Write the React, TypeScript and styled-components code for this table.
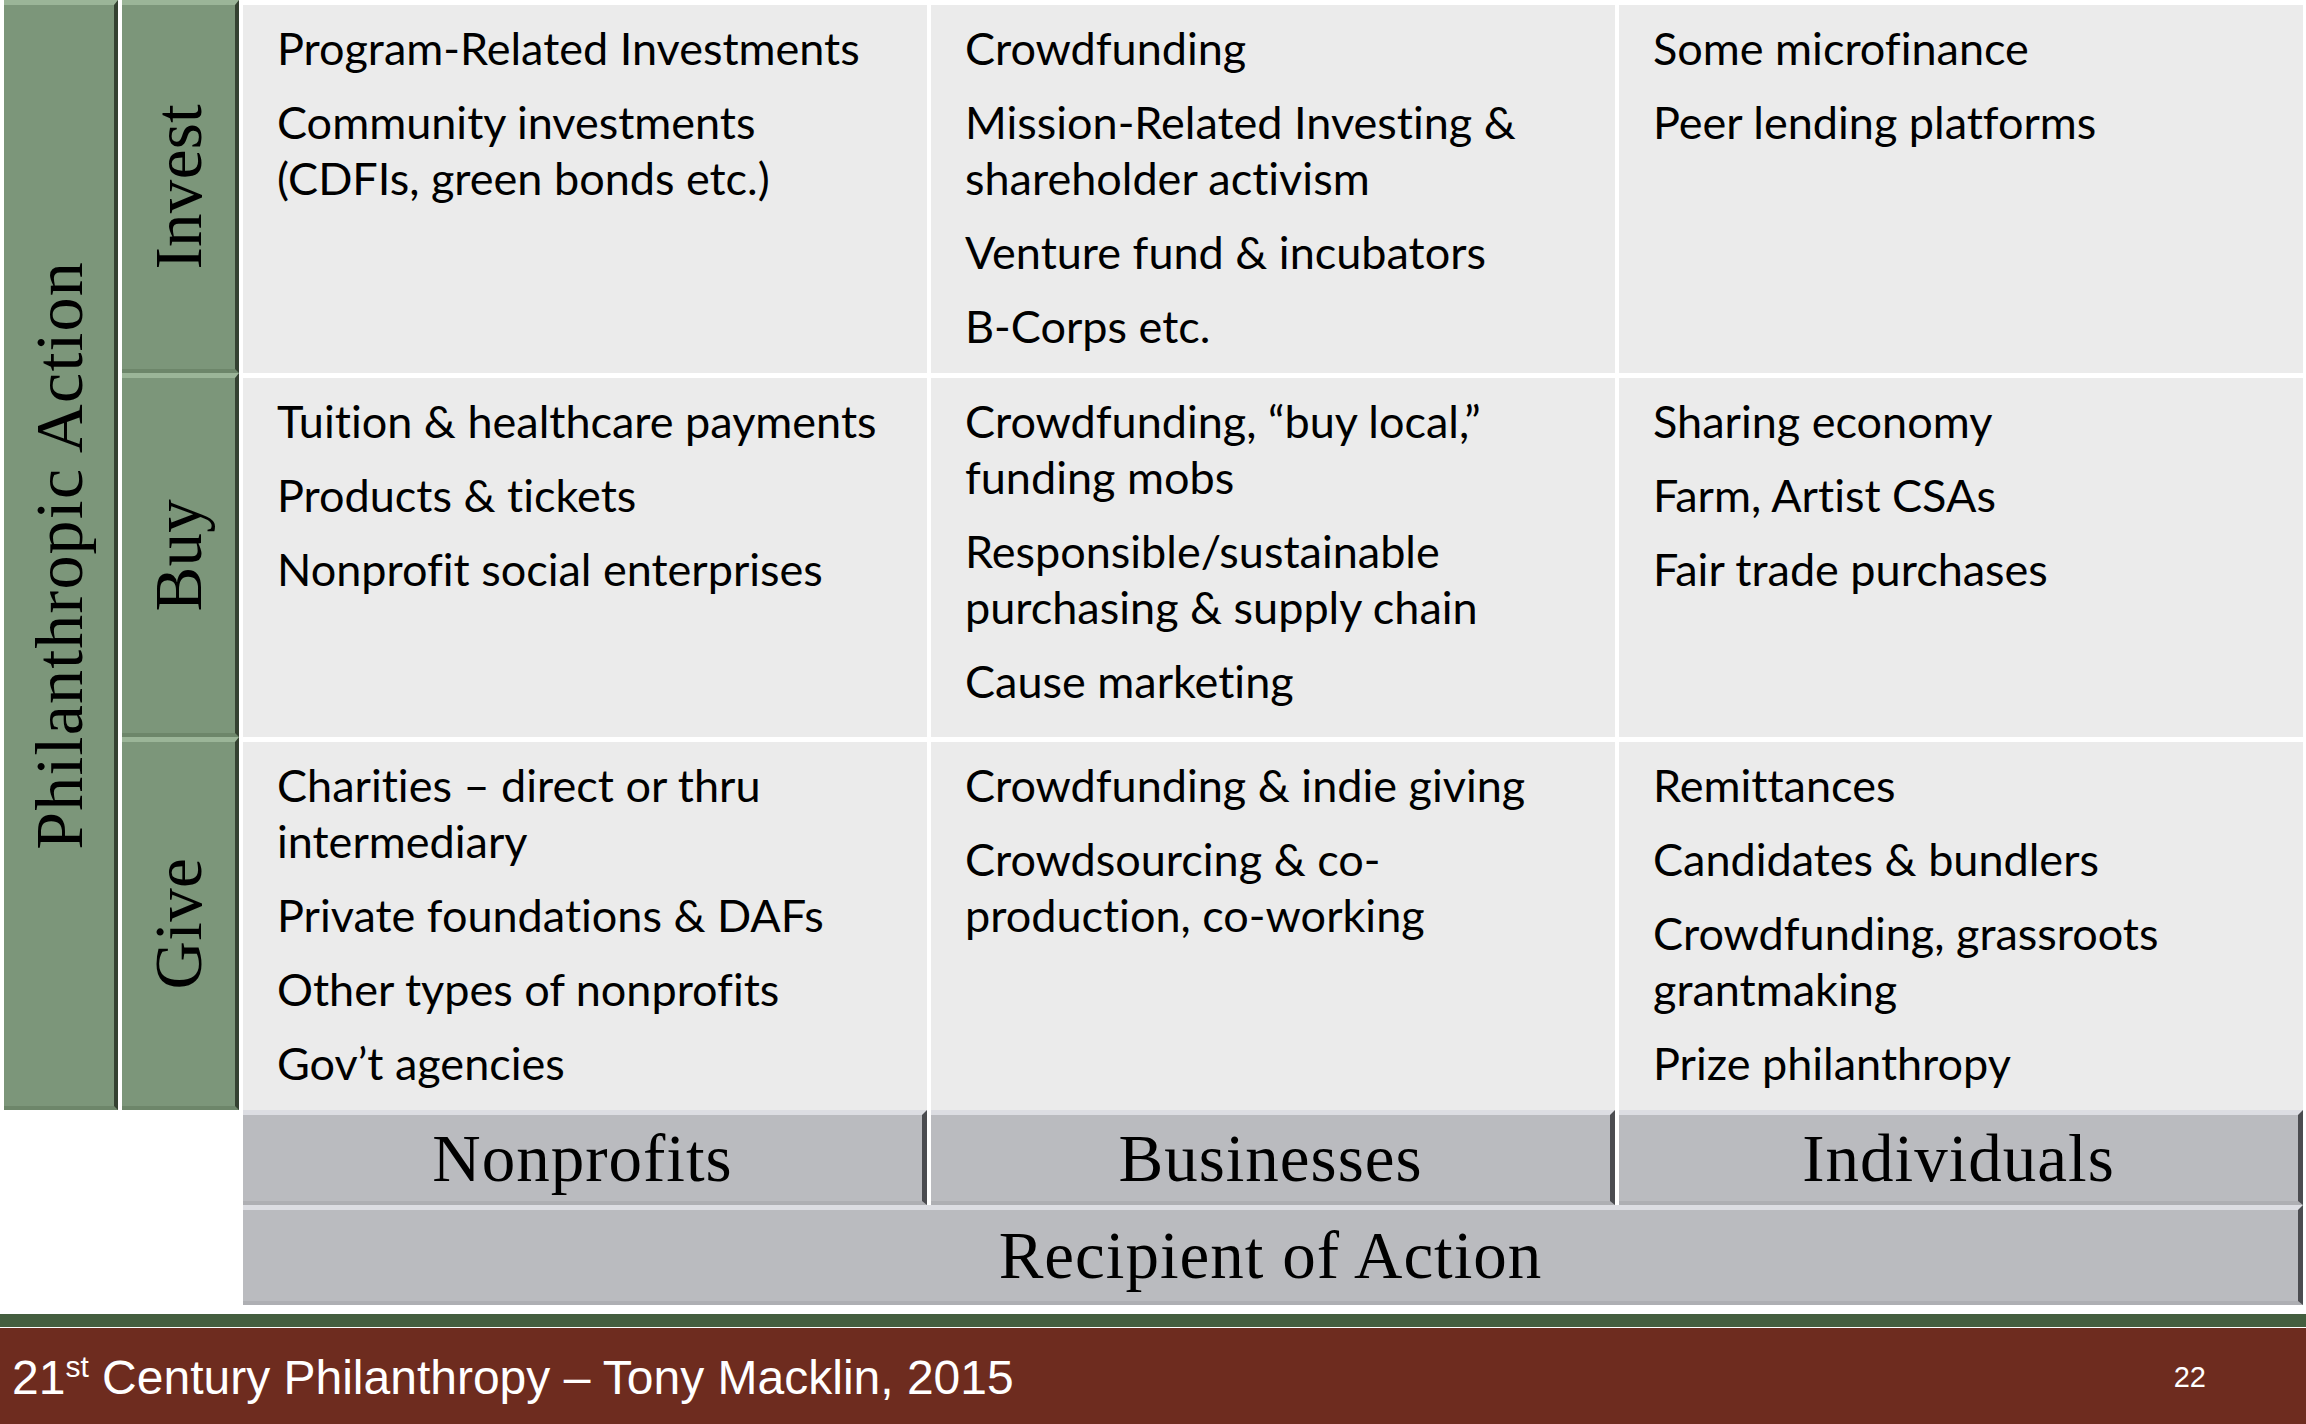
import React from 'react';
import styled, { createGlobalStyle } from 'styled-components';

const Global = createGlobalStyle`
  html, body { margin: 0; padding: 0; background: #ffffff; }
  body { width: 2306px; height: 1424px; overflow: hidden; }
  * { box-sizing: border-box; }
`;

const Slide = styled.div`
  width: 2306px;
  height: 1424px;
  display: flex;
  flex-direction: column;
  background: #ffffff;
`;

const Matrix = styled.div`
  display: grid;
  grid-template-columns: 114px 117px repeat(3, 1fr);
  grid-template-rows: 373px 364px 373px 95px 100px;
  column-gap: 4px;
  padding: 0 3px 0 4px;
`;

const Bar = styled.div<{ $col: number; $rows: string }>`
  grid-column: ${(p) => p.$col};
  grid-row: ${(p) => p.$rows};
  background: #7c967a;
  border-top: 5px solid #9bb598;
  border-bottom: 4px solid #6d866a;
  border-right: 4px solid #344131;
  display: flex;
  align-items: center;
  justify-content: center;
`;

const SideLabel = styled.span<{ $wide?: boolean }>`
  writing-mode: vertical-rl;
  transform: rotate(180deg);
  font-family: "Liberation Serif", "Times New Roman", serif;
  font-size: ${(p) => (p.$wide ? '68px' : '67px')};
  letter-spacing: ${(p) => (p.$wide ? '1.2px' : '0.3px')};
  line-height: 1;
  color: #000;
  white-space: nowrap;
`;

const Cell = styled.div<{ $col: number; $row: number }>`
  grid-column: ${(p) => p.$col};
  grid-row: ${(p) => p.$row};
  background: #ebebeb;
  border-top: 5px solid #ffffff;
  padding: 15px 10px 0 34px;
  display: flex;
  flex-direction: column;
  gap: 18px;
`;

const Item = styled.p`
  margin: 0;
  font-family: Lato, "Open Sans", sans-serif;
  font-size: 45px;
  line-height: 56px;
  color: #000;
  white-space: nowrap;
  font-variant-ligatures: none;
`;

const Header = styled.div<{ $col: string; $row: number }>`
  grid-column: ${(p) => p.$col};
  grid-row: ${(p) => p.$row};
  background: #babbbf;
  border-top: 5px solid #dcdde2;
  border-bottom: 4px solid #aeafb3;
  border-right: 5px solid #4b4c50;
  display: flex;
  align-items: center;
  justify-content: center;
  font-family: "Liberation Serif", "Times New Roman", serif;
  font-size: 67px;
  letter-spacing: 1px;
  line-height: 1;
  color: #000;
  white-space: nowrap;
`;

const Rule = styled.div`
  margin-top: 9px;
  height: 13px;
  background: #445e3f;
`;

const Footer = styled.footer`
  height: 97px;
  border-top: 1px solid #ffffff;
  background: #6e2c1f;
  display: flex;
  align-items: center;
  justify-content: space-between;
  padding: 3px 100px 0 12px;
  color: #ffffff;
  font-family: "Liberation Sans", Arial, sans-serif;
`;

const FooterTitle = styled.span`
  font-size: 48px;
  line-height: 1;
  white-space: nowrap;
`;

const Sup = styled.sup`
  font-size: 30px;
  line-height: 0;
  vertical-align: 17px;
`;

const PageNum = styled.span`
  font-size: 29px;
  line-height: 1;
`;

type Lines = string[];
type Row = { label: string; cells: Lines[][] };

const rows: Row[] = [
  {
    label: 'Invest',
    cells: [
      [['Program-Related Investments'], ['Community investments', '(CDFIs, green bonds etc.)']],
      [
        ['Crowdfunding'],
        ['Mission-Related Investing &', 'shareholder activism'],
        ['Venture fund & incubators'],
        ['B-Corps etc.'],
      ],
      [['Some microfinance'], ['Peer lending platforms']],
    ],
  },
  {
    label: 'Buy',
    cells: [
      [['Tuition & healthcare payments'], ['Products & tickets'], ['Nonprofit social enterprises']],
      [
        ['Crowdfunding, \u201cbuy local,\u201d', 'funding mobs'],
        ['Responsible/sustainable', 'purchasing & supply chain'],
        ['Cause marketing'],
      ],
      [['Sharing economy'], ['Farm, Artist CSAs'], ['Fair trade purchases']],
    ],
  },
  {
    label: 'Give',
    cells: [
      [
        ['Charities \u2013 direct or thru', 'intermediary'],
        ['Private foundations & DAFs'],
        ['Other types of nonprofits'],
        ['Gov\u2019t agencies'],
      ],
      [['Crowdfunding & indie giving'], ['Crowdsourcing & co-', 'production, co-working']],
      [
        ['Remittances'],
        ['Candidates & bundlers'],
        ['Crowdfunding, grassroots', 'grantmaking'],
        ['Prize philanthropy'],
      ],
    ],
  },
];

const recipients = ['Nonprofits', 'Businesses', 'Individuals'];

export default function App() {
  return (
    <>
      <Global />
      <Slide>
        <Matrix>
          <Bar $col={1} $rows="1 / 4">
            <SideLabel $wide>Philanthropic Action</SideLabel>
          </Bar>
          {rows.map((row, ri) => (
            <React.Fragment key={row.label}>
              <Bar $col={2} $rows={`${ri + 1}`}>
                <SideLabel>{row.label}</SideLabel>
              </Bar>
              {row.cells.map((items, ci) => (
                <Cell key={ci} $col={ci + 3} $row={ri + 1}>
                  {items.map((lines, ii) => (
                    <Item key={ii}>
                      {lines.map((l, li) => (
                        <React.Fragment key={li}>
                          {li > 0 && <br />}
                          {l}
                        </React.Fragment>
                      ))}
                    </Item>
                  ))}
                </Cell>
              ))}
            </React.Fragment>
          ))}
          {recipients.map((r, i) => (
            <Header key={r} $col={`${i + 3}`} $row={4}>
              {r}
            </Header>
          ))}
          <Header $col="3 / 6" $row={5}>
            Recipient of Action
          </Header>
        </Matrix>
        <Rule />
        <Footer>
          <FooterTitle>
            21<Sup>st</Sup> Century Philanthropy – Tony Macklin, 2015
          </FooterTitle>
          <PageNum>22</PageNum>
        </Footer>
      </Slide>
    </>
  );
}
